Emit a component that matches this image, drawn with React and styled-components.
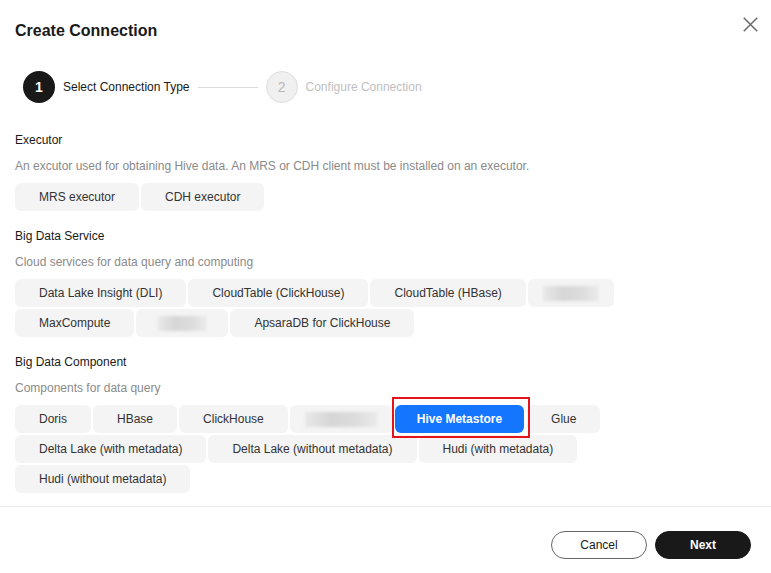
import React from 'react';
import styled, { createGlobalStyle, css } from 'styled-components';

const GlobalStyle = createGlobalStyle`
  html, body {
    margin: 0;
    padding: 0;
    background: #fff;
  }
  body {
    font-family: "Liberation Sans", Arial, sans-serif;
    color: #191919;
  }
`;

const Dialog = styled.div`
  width: 771px;
  min-height: 573px;
  background: #fff;
  display: flex;
  flex-direction: column;
  box-sizing: border-box;
`;

const Header = styled.div`
  display: flex;
  justify-content: space-between;
  align-items: flex-start;
  padding: 20px 13px 0 15px;
`;

const Title = styled.h1`
  margin: 0;
  font-size: 16px;
  line-height: 22px;
  font-weight: 700;
  color: #191919;
`;

const CloseButton = styled.button`
  margin-top: -3px;
  width: 15px;
  height: 15px;
  padding: 0;
  border: 0;
  background: none;
  cursor: pointer;
  display: flex;
`;

const Steps = styled.div`
  display: flex;
  align-items: center;
  margin-top: 29px;
  padding-left: 23px;
`;

const StepCircle = styled.div`
  width: 32px;
  height: 32px;
  border-radius: 50%;
  box-sizing: border-box;
  display: flex;
  align-items: center;
  justify-content: center;
  font-size: 14px;
  ${({ active }) =>
    active
      ? css`
          background: #191919;
          color: #fff;
          font-weight: 700;
        `
      : css`
          background: #f0f0f0;
          border: 1px solid #dedede;
          color: #b8b8b8;
        `}
`;

const StepLabel = styled.span`
  margin-left: 8px;
  font-size: 12px;
  color: ${({ active }) => (active ? '#191919' : '#c0c0c0')};
`;

const StepLine = styled.div`
  width: 60px;
  height: 1px;
  background: #dcdcdc;
  margin: 0 8px;
`;

const Content = styled.div`
  margin-top: 27px;
  padding: 0 15px;
`;

const Section = styled.section`
  & + & {
    margin-top: 15px;
  }
`;

const SectionTitle = styled.div`
  font-size: 12px;
  line-height: 20px;
  color: #191919;
`;

const SectionDesc = styled.div`
  margin-top: 6px;
  font-size: 12px;
  line-height: 20px;
  color: #8a8a8a;
`;

const ChipGroup = styled.div`
  margin-top: 7px;
  max-width: 640px;
  display: flex;
  flex-wrap: wrap;
  gap: 2px;
`;

const Chip = styled.div`
  position: relative;
  height: 28px;
  box-sizing: border-box;
  padding: 0 24px;
  display: flex;
  align-items: center;
  justify-content: center;
  border-radius: 6px;
  font-size: 12px;
  white-space: nowrap;
  background: #f4f4f4;
  color: #333;
  ${({ selected }) =>
    selected &&
    css`
      z-index: 1;
      padding: 0 22px;
      background: #1476ff;
      color: #fff;
      font-weight: 700;
      margin-right: 1px;

      &::after {
        content: '';
        position: absolute;
        top: -8px;
        bottom: -5px;
        left: -3px;
        right: -6px;
        border: 2px solid #e3151b;
        pointer-events: none;
      }
    `}
`;

const BlurChip = styled(Chip)`
  padding: 0;
  width: ${({ w }) => w}px;
`;

const Blurred = styled.span`
  display: block;
  width: ${({ w }) => w}px;
  height: 15px;
  background: linear-gradient(90deg, #e8e8e8, #d6d6d6 35%, #dcdcdc 70%, #ebebeb);
  filter: blur(1.5px);
`;

const Footer = styled.div`
  margin-top: 13px;
  border-top: 1px solid #ececec;
  padding: 24px 20px 14px;
  display: flex;
  justify-content: flex-end;
  gap: 8px;
`;

const FooterButton = styled.button`
  width: 96px;
  height: 28px;
  border-radius: 14px;
  font-family: inherit;
  font-size: 12px;
  cursor: pointer;
  box-sizing: border-box;
  ${({ primary }) =>
    primary
      ? css`
          background: #191919;
          color: #fff;
          border: 1px solid #191919;
          font-weight: 700;
        `
      : css`
          background: #fff;
          color: #191919;
          border: 1px solid #666;
        `}
`;

const sections = [
  {
    title: 'Executor',
    desc: 'An excutor used for obtaining Hive data. An MRS or CDH client must be installed on an executor.',
    items: [{ label: 'MRS executor' }, { label: 'CDH executor' }],
  },
  {
    title: 'Big Data Service',
    desc: 'Cloud services for data query and computing',
    items: [
      { label: 'Data Lake Insight (DLI)' },
      { label: 'CloudTable (ClickHouse)' },
      { label: 'CloudTable (HBase)' },
      { blur: 56, width: 86 },
      { label: 'MaxCompute' },
      { blur: 49, width: 92 },
      { label: 'ApsaraDB for ClickHouse' },
    ],
  },
  {
    title: 'Big Data Component',
    desc: 'Components for data query',
    items: [
      { label: 'Doris' },
      { label: 'HBase' },
      { label: 'ClickHouse' },
      { blur: 73, width: 103 },
      { label: 'Hive Metastore', selected: true },
      { label: 'Glue' },
      { label: 'Delta Lake (with metadata)' },
      { label: 'Delta Lake (without metadata)' },
      { label: 'Hudi (with metadata)' },
      { label: 'Hudi (without metadata)' },
    ],
  },
];

const CloseIcon = () => (
  <svg width="15" height="15" viewBox="0 0 15 15">
    <path d="M0.75 0.75 L14.25 14.25 M14.25 0.75 L0.75 14.25" stroke="#6a6a6a" strokeWidth="1.5" fill="none" />
  </svg>
);

const App = () => {
  return (
    <Dialog>
      <GlobalStyle />
      <Header>
        <Title>Create Connection</Title>
        <CloseButton aria-label="Close">
          <CloseIcon />
        </CloseButton>
      </Header>

      <Steps>
        <StepCircle active>1</StepCircle>
        <StepLabel active>Select Connection Type</StepLabel>
        <StepLine />
        <StepCircle>2</StepCircle>
        <StepLabel>Configure Connection</StepLabel>
      </Steps>

      <Content>
        {sections.map((s) => (
          <Section key={s.title}>
            <SectionTitle>{s.title}</SectionTitle>
            <SectionDesc>{s.desc}</SectionDesc>
            <ChipGroup>
              {s.items.map((it, i) =>
                it.blur ? (
                  <BlurChip key={i} w={it.width}>
                    <Blurred w={it.blur} />
                  </BlurChip>
                ) : (
                  <Chip key={i} selected={it.selected}>
                    {it.label}
                  </Chip>
                )
              )}
            </ChipGroup>
          </Section>
        ))}
      </Content>

      <Footer>
        <FooterButton>Cancel</FooterButton>
        <FooterButton primary>Next</FooterButton>
      </Footer>
    </Dialog>
  );
};

export default App;
